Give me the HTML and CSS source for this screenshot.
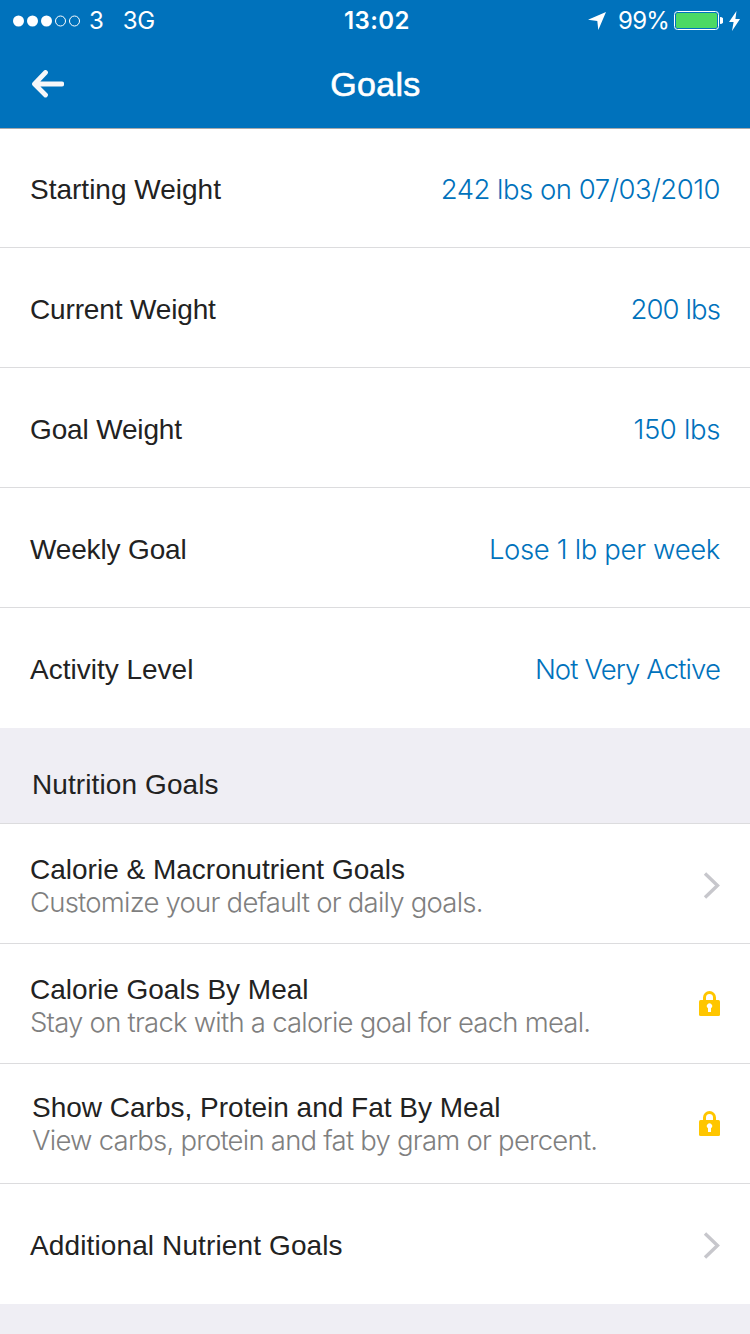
FILE: index.html
```html
<!DOCTYPE html>
<html lang="en">
<head>
    <meta charset="utf-8">
    <title>Goals</title>
    <link rel="stylesheet" href="styles.css">
</head>
<body>
    <header class="header">
        <div class="status">
            <div class="status-left">
                <svg class="signal" width="68" height="12" viewBox="0 0 68 12">
                    <g fill="#fff">
                        <circle cx="5.5" cy="6" r="5.5"/>
                        <circle cx="19.5" cy="6" r="5.5"/>
                        <circle cx="33.5" cy="6" r="5.5"/>
                    </g>
                    <g fill="none" stroke="#fff">
                        <circle cx="47.5" cy="6" r="5"/>
                        <circle cx="61.5" cy="6" r="5"/>
                    </g>
                </svg>
                <span class="carrier">3</span>
                <span class="network">3G</span>
            </div>
            <div class="time">13:02</div>
            <div class="status-right">
                <svg class="location" width="18" height="18" viewBox="0 0 18 18">
                    <path d="M18 0L10.3 18L9.3 9L0 7.8Z" fill="#fff"/>
                </svg>
                <span class="percent">99%</span>
                <svg class="battery" width="49" height="19" viewBox="0 0 49 19">
                    <rect x="0.5" y="0.5" width="44" height="18" rx="3" fill="none" stroke="#fff"/>
                    <rect x="2" y="2" width="41" height="15" rx="1.5" fill="#4cd964"/>
                    <path d="M46 6a3.5 3.5 0 0 1 0 7z" fill="#fff"/>
                </svg>
                <svg class="bolt" width="11" height="20" viewBox="0 0 11 20">
                    <path d="M7.5 0L0 11H4.6L3 20L11 8H6.4Z" fill="#fff"/>
                </svg>
            </div>
        </div>
        <div class="navbar">
            <svg class="back" width="32" height="28" viewBox="0 0 32 28">
                <path d="M13.5 2.5L2.5 14L13.5 25M3 14H29.8" fill="none" stroke="#f7f7f9" stroke-width="4.8" stroke-linecap="round" stroke-linejoin="round"/>
            </svg>
            <h1>Goals</h1>
        </div>
    </header>

    <div class="list">
        <div class="row first">
            <span class="label">Starting Weight</span>
            <span class="value">242 lbs on 07/03/2010</span>
        </div>
        <div class="row">
            <span class="label tight">Current Weight</span>
            <span class="value narrow">200 lbs</span>
        </div>
        <div class="row">
            <span class="label tight">Goal Weight</span>
            <span class="value wide">150 lbs</span>
        </div>
        <div class="row">
            <span class="label tight">Weekly Goal</span>
            <span class="value wide">Lose 1 lb per week</span>
        </div>
        <div class="row last">
            <span class="label">Activity Level</span>
            <span class="value narrow">Not Very Active</span>
        </div>
    </div>

    <h2 class="section">Nutrition Goals</h2>

    <div class="list">
        <div class="row">
            <div class="text">
                <div class="label">Calorie &amp; Macronutrient Goals</div>
                <div class="desc">Customize your default or daily goals.</div>
            </div>
            <svg class="chevron" width="17" height="27" viewBox="0 0 17 27">
                <path d="M2 1.5L14.5 13.5L2 25.5" fill="none" stroke="#c7c7cc" stroke-width="3.4"/>
            </svg>
        </div>
        <div class="row">
            <div class="text">
                <div class="label">Calorie Goals By Meal</div>
                <div class="desc">Stay on track with a calorie goal for each meal.</div>
            </div>
            <svg class="lock" width="21" height="25" viewBox="0 0 21 25">
                <path d="M5.5 10V6.5a5 5 0 0 1 10 0V10" fill="none" stroke="#ffc600" stroke-width="3"/>
                <rect y="9" width="21" height="16" rx="1.5" fill="#ffc600"/>
                <path d="M9 17.2a2.6 2.6 0 1 1 3 0V21H9z" fill="#fff"/>
            </svg>
        </div>
        <div class="row shifted">
            <div class="text">
                <div class="label">Show Carbs, Protein and Fat By Meal</div>
                <div class="desc">View carbs, protein and fat by gram or percent.</div>
            </div>
            <svg class="lock" width="21" height="25" viewBox="0 0 21 25">
                <path d="M5.5 10V6.5a5 5 0 0 1 10 0V10" fill="none" stroke="#ffc600" stroke-width="3"/>
                <rect y="9" width="21" height="16" rx="1.5" fill="#ffc600"/>
                <path d="M9 17.2a2.6 2.6 0 1 1 3 0V21H9z" fill="#fff"/>
            </svg>
        </div>
        <div class="row last">
            <span class="label spaced">Additional Nutrient Goals</span>
            <svg class="chevron" width="17" height="27" viewBox="0 0 17 27">
                <path d="M2 1.5L14.5 13.5L2 25.5" fill="none" stroke="#c7c7cc" stroke-width="3.4"/>
            </svg>
        </div>
    </div>
</body>
</html>
```
FILE: styles.css
```css
* { box-sizing: border-box; }
body { margin: 0; height: 1334px; overflow: hidden; background: #efeef4; color: #222; font-family: "Liberation Sans", Arial, sans-serif; font-size: 28px; }
svg { display: block; flex: none; }

/* header */
.header { height: 129px; background: #0072bc; border-bottom: 1px solid #a7a9ac; color: #fff; }
.status { display: grid; grid-template-columns: 1fr auto 1fr; align-items: center; height: 40px; padding: 1px 10px 0 13px; font-family: Inter, sans-serif; font-size: 24px; line-height: 40px; }
.status-left, .status-right { display: flex; align-items: center; }
.status-right { justify-content: flex-end; }
.carrier { margin-left: 8px; }
.network { margin-left: 19px; letter-spacing: -0.5px; }
.time { margin-left: 1px; font-weight: 600; letter-spacing: 0.4px; }
.percent { margin-left: 12px; letter-spacing: -0.8px; }
.battery { margin: -2px 0 0 5px; }
.bolt { margin-left: 6px; }
.navbar { display: grid; grid-template-columns: 1fr auto 1fr; align-items: center; height: 88px; padding: 0 32px; }
h1 { margin: 0 0 0 1px; font-size: 34px; font-weight: 400; line-height: 40px; letter-spacing: 0.3px; -webkit-text-stroke: 0.6px #fff; }

/* rows */
.list { background: #fff; }
.row { display: flex; align-items: center; justify-content: space-between; height: 120px; padding: 4px 30px 0; border-bottom: 1px solid #dcdcde; }
.first { height: 119px; padding-top: 3px; }
.last { padding-top: 3px; border-bottom: 0; }
.label { line-height: 33px; }
.tight { letter-spacing: -0.15px; }
.spaced { letter-spacing: 0.12px; }
.value { margin-top: -2px; color: #0072bc; font-family: Inter, sans-serif; font-size: 27.5px; font-weight: 300; letter-spacing: -0.5px; }
.wide { letter-spacing: -0.35px; }
.narrow { letter-spacing: -0.9px; }
.desc { color: #7f7f7f; font-family: Inter, sans-serif; font-size: 27.5px; font-weight: 300; line-height: 33px; letter-spacing: -0.77px; }
.shifted { padding-left: 32px; }
.shifted .text { margin-top: -4px; }
.chevron { margin-top: -1px; }
.lock { margin-top: -4px; }
.section { margin: 0; height: 96px; padding: 40px 32px 0; border-bottom: 1px solid #dcdcde; font-size: 28px; font-weight: 400; line-height: 33px; letter-spacing: 0.1px; }
```
